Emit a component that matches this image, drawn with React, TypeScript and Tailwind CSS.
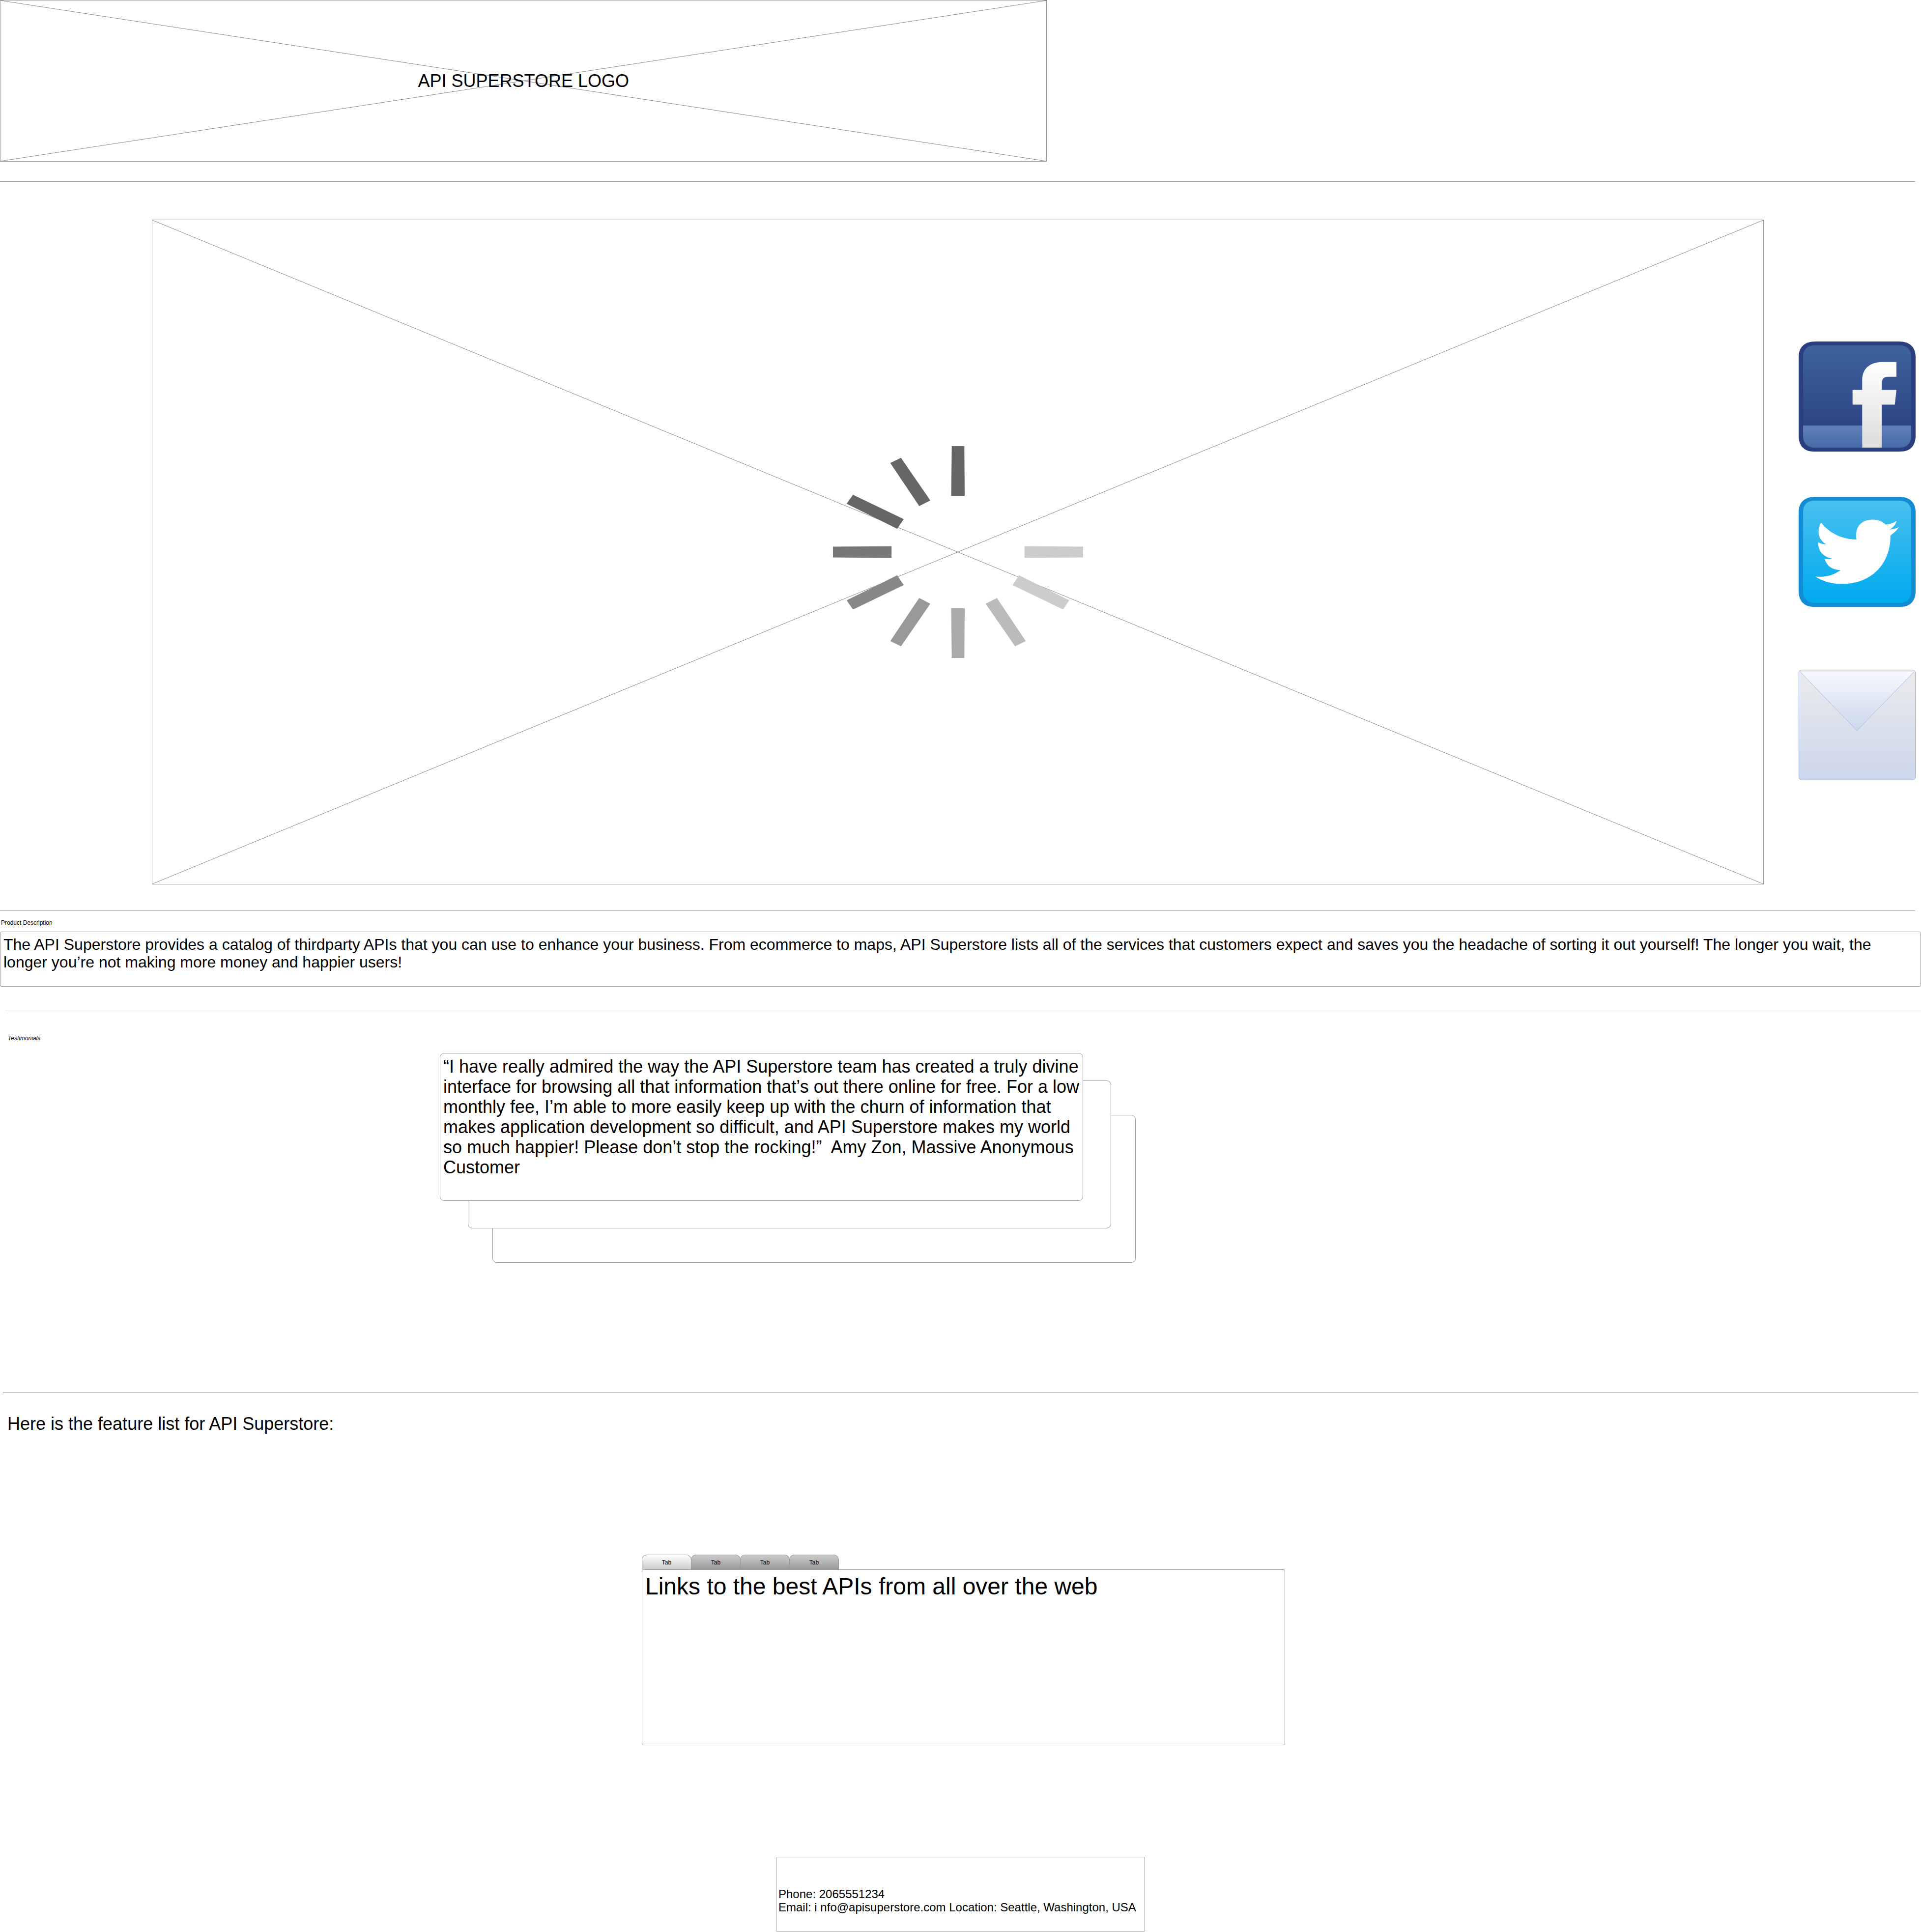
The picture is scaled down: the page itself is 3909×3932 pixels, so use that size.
import { useState, type ReactNode } from "react";

function Placeholder({ className, children }: { className: string; children: ReactNode }) {
  return (
    <div className={`relative flex items-center justify-center border border-[#999999] ${className}`}>
      <svg className="absolute inset-0 h-full w-full" aria-hidden="true">
        <line x1="0" y1="0" x2="100%" y2="100%" stroke="#888888" />
        <line x1="0" y1="100%" x2="100%" y2="0" stroke="#888888" />
      </svg>
      <div className="relative flex">{children}</div>
    </div>
  );
}

const spokes = [
  { fill: "#666666", points: "746,82 815,82 817,385 743,385" },
  { fill: "#666666", points: "408,185 467,153 628,414 567,448" },
  { fill: "#666666", points: "203,379 482,528 446,587 168,434" },
  { fill: "#777777", points: "93,696 415,694 415,765 93,762" },
  { fill: "#888888", points: "168,1024 446,871 482,931 203,1080" },
  { fill: "#999999", points: "567,1010 628,1045 467,1305 408,1273" },
  { fill: "#aaaaaa", points: "743,1072 817,1072 815,1376 746,1376" },
  { fill: "#bbbbbb", points: "932,1045 994,1010 1153,1273 1094,1305" },
  { fill: "#cccccc", points: "1116,871 1392,1024 1358,1080 1080,931" },
  { fill: "#cccccc", points: "1146,694 1468,696 1468,762 1146,765" },
];

function Spinner() {
  return (
    <svg
      className="h-[431px] w-[509px]"
      viewBox="93 82 1375 1294"
      preserveAspectRatio="none"
      role="img"
      aria-label="Loading"
    >
      {spokes.map((s) => (
        <polygon key={s.points} points={s.points} fill={s.fill} />
      ))}
    </svg>
  );
}

const outerTile =
  "M35 0H203C228 0 238 13 238 32V192C238 211 228 224 207 224H31C10 224 0 211 0 192V32C0 13 10 0 35 0Z";
const innerTile =
  "M32 8H206C222 8 229 18 229 32V192C229 207 220 216 206 216H32C18 216 9 207 9 192V32C9 18 16 8 32 8Z";

function FacebookIcon() {
  return (
    <svg className="block h-[224px] w-[238px]" viewBox="0 0 238 224" aria-hidden="true">
      <defs>
        <linearGradient id="fb-face" x1="0" y1="0" x2="0" y2="1">
          <stop offset="0" stopColor="#3d639e" />
          <stop offset="0.8" stopColor="#2d4484" />
          <stop offset="1" stopColor="#2d4484" />
        </linearGradient>
        <linearGradient id="fb-band" x1="0" y1="0" x2="0" y2="1">
          <stop offset="0" stopColor="#617fba" />
          <stop offset="1" stopColor="#456ca8" />
        </linearGradient>
        <linearGradient id="fb-mark" x1="0" y1="0" x2="0" y2="1">
          <stop offset="0" stopColor="#ffffff" />
          <stop offset="1" stopColor="#dcdcdc" />
        </linearGradient>
        <clipPath id="fb-clip">
          <path d={innerTile} />
        </clipPath>
      </defs>
      <path d={outerTile} fill="#2b3f80" />
      <path d={innerTile} fill="url(#fb-face)" />
      <rect x="8" y="171" width="222" height="45" fill="url(#fb-band)" clipPath="url(#fb-clip)" />
      <path
        d="M129.300 216V128.600H109.700V98.600H129.300V78.600C129.300 56 144 41.800 171 41.800H199V71.800H183C174 71.800 169.300 76 169.300 84V98.600H199L195.700 128.600H169.300V216Z"
        fill="url(#fb-mark)"
      />
    </svg>
  );
}

function TwitterIcon() {
  return (
    <svg className="block h-[224px] w-[238px]" viewBox="0 0 238 224" aria-hidden="true">
      <defs>
        <linearGradient id="tw-face" x1="0" y1="0" x2="0" y2="1">
          <stop offset="0" stopColor="#48c0ee" />
          <stop offset="1" stopColor="#00aaee" />
        </linearGradient>
      </defs>
      <path d={outerTile} fill="#128cd2" />
      <path d={innerTile} fill="url(#tw-face)" />
      <path
        d="M45.700 52.500C56 66 79 86.400 117.700 87.100C114 65 124 46.400 150.700 46.400C162.300 46.400 170.700 50 177.300 56.800C185.700 55.700 193 53.200 199.300 48.900C197 57.900 191.700 63.200 184.300 67.100C191 66.400 198.300 65 204 62.100C199.700 68.600 193 74.600 186.700 78.900C188 131 152.300 177.500 89 177.500C69 177.500 50.700 173.200 34.300 162.500C54 163.900 70.700 160.400 85.300 148.900C69 148.900 58 141.800 52.700 126.400C58 127.100 63 127.100 68 125.700C50.700 122.100 39.300 111.400 40 92.500C45 95.400 50.700 96.800 56 96.800C39 86.400 36.700 68.600 45.700 52.500Z"
        fill="#ffffff"
      />
    </svg>
  );
}

function MailIcon() {
  return (
    <svg className="block h-[225px] w-[238px]" viewBox="0 0 238 225" aria-hidden="true">
      <defs>
        <linearGradient id="mail-body" x1="0" y1="0" x2="0" y2="1">
          <stop offset="0" stopColor="#ebebeb" />
          <stop offset="1" stopColor="#ccd7eb" />
        </linearGradient>
        <linearGradient id="mail-flap" x1="0" y1="0" x2="0" y2="1">
          <stop offset="0" stopColor="#f7f9fd" />
          <stop offset="1" stopColor="#cbd7ec" />
        </linearGradient>
      </defs>
      <rect x="0.5" y="0.5" width="237" height="224" rx="6" fill="url(#mail-body)" stroke="#8fa6d4" />
      <path d="M3 4L118.500 124L235 4Z" fill="url(#mail-flap)" />
      <path d="M3 4L118.500 124L235 4" fill="none" stroke="#a6bbdf" />
    </svg>
  );
}

function Rule({ className }: { className: string }) {
  return <hr className={`border-0 border-t border-solid border-[#999999] ${className}`} />;
}

const tabs = [0, 1, 2, 3];

function FeatureTabs() {
  const [active, setActive] = useState(0);
  return (
    <section className="mt-[246px] ml-[1306px] max-w-[1309px]">
      <div role="tablist" className="flex h-[30px]">
        {tabs.map((i) => (
          <button
            key={i}
            type="button"
            role="tab"
            id={`tab-${i}`}
            aria-selected={i === active}
            aria-controls="tab-panel"
            onClick={() => setActive(i)}
            className={
              i === active
                ? "-mr-px w-[101px] rounded-t-[10px] border border-b-0 border-[#999999] bg-linear-to-b from-white to-[#cccccc] text-[12px] leading-[14px]"
                : "-mr-px w-[101px] rounded-t-[10px] border border-b-0 border-[#999999] bg-linear-to-b from-[#cccccc] to-[#999999] text-[12px] leading-[14px]"
            }
          >
            Tab
          </button>
        ))}
      </div>
      <div
        role="tabpanel"
        id="tab-panel"
        aria-labelledby={`tab-${active}`}
        className="min-h-[358px] rounded-[3px] border border-[#999999] p-[6px]"
      >
        <p className="text-[48px] leading-[55px]">Links to the best APIs from all over the web</p>
      </div>
    </section>
  );
}

export default function App() {
  return (
    <div className="w-full bg-white font-['Liberation_Sans',Arial,sans-serif] text-black">
      <header>
        <Placeholder className="min-h-[329px] w-[54.5%]">
          <h1 className="text-[36px] leading-[41px]">API SUPERSTORE LOGO</h1>
        </Placeholder>
      </header>
      <Rule className="mt-[40px] mr-[12px]" />

      <section className="mt-[77px] mr-[11px] ml-[309px] flex gap-[71px]">
        <Placeholder className="min-h-[1353px] flex-1">
          <Spinner />
        </Placeholder>
        <nav aria-label="Social" className="flex flex-col pt-[248px]">
          <a href="#facebook" aria-label="Facebook">
            <FacebookIcon />
          </a>
          <a href="#twitter" aria-label="Twitter" className="mt-[92px]">
            <TwitterIcon />
          </a>
          <a href="#email" aria-label="Email" className="mt-[128px]">
            <MailIcon />
          </a>
        </nav>
      </section>
      <Rule className="mt-[53px] mr-[12px]" />

      <section className="mt-[17px]">
        <h2 className="pl-[2px] text-[12px] leading-[14px]">Product Description</h2>
        <p className="mt-[11px] min-h-[112px] rounded-[3px] border border-[#999999] px-[6px] py-[7px] text-[32px] leading-[36px]">
          The API Superstore provides a catalog of thirdparty APIs that you can use to enhance your business. From
          ecommerce to maps, API Superstore lists all of the services that customers expect and saves you the headache
          of sorting it out yourself! The longer you wait, the longer you’re not making more money and happier users!
        </p>
      </section>
      <Rule className="mt-[49px] ml-[11px]" />

      <section className="mt-[48px] pb-[126px]">
        <h2 className="pl-[16px] text-[12px] leading-[14px] italic">Testimonials</h2>
        <div className="relative mt-[23px] ml-[895px] max-w-[1309px]">
          <div className="absolute top-[126px] left-[107px] h-full w-full rounded-[9px] border border-[#999999] bg-white" />
          <div className="absolute top-[56px] left-[57px] h-full w-full rounded-[9px] border border-[#999999] bg-white" />
          <blockquote className="relative min-h-[301px] rounded-[9px] border border-[#999999] bg-white py-[6px] pr-[2px] pl-[6px] text-[36px] leading-[41px]">
            “I have really admired the way the API Superstore team has created a truly divine interface for browsing
            all that information that’s out there online for free. For a low monthly fee, I’m able to more easily keep
            up with the churn of information that makes application development so difficult, and API Superstore makes
            my world so much happier! Please don’t stop the rocking!”&nbsp; Amy Zon, Massive Anonymous Customer
          </blockquote>
        </div>
      </section>
      <Rule className="mt-[263px] mr-[6px] ml-[6px]" />

      <h2 className="mt-[43px] pl-[15px] text-[36px] leading-[41px]">Here is the feature list for API Superstore:</h2>
      <FeatureTabs />

      <footer className="mx-auto mt-[227px] min-h-[153px] max-w-[751px] rounded-[3px] border border-[#999999] px-[4px] pt-[61px]">
        <address className="text-[24px] leading-[27px] not-italic">
          <p>Phone: 2065551234</p>
          <p>
            Email: <a href="mailto:info@apisuperstore.com">i nfo@apisuperstore.com</a> Location: Seattle, Washington,
            USA
          </p>
        </address>
      </footer>
    </div>
  );
}
